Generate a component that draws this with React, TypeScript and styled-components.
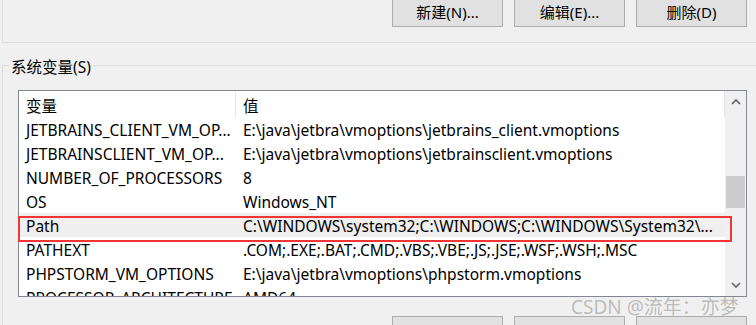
import React from 'react';
import styled, { createGlobalStyle } from 'styled-components';

const GlobalStyle = createGlobalStyle`
  html, body {
    margin: 0;
    padding: 0;
    background: #f0f0f0;
  }
  body {
    font-family: "Noto Sans", "Noto Sans CJK SC", sans-serif;
    font-size: 15px;
    color: #000000;
  }
`;

const rows = [
  { name: 'JETBRAINS_CLIENT_VM_OP...', value: 'E:\\java\\jetbra\\vmoptions\\jetbrains_client.vmoptions' },
  { name: 'JETBRAINSCLIENT_VM_OP...', value: 'E:\\java\\jetbra\\vmoptions\\jetbrainsclient.vmoptions' },
  { name: 'NUMBER_OF_PROCESSORS', value: '8' },
  { name: 'OS', value: 'Windows_NT' },
  { name: 'Path', value: 'C:\\WINDOWS\\system32;C:\\WINDOWS;C:\\WINDOWS\\System32\\...', selected: true },
  { name: 'PATHEXT', value: '.COM;.EXE;.BAT;.CMD;.VBS;.VBE;.JS;.JSE;.WSF;.WSH;.MSC' },
  { name: 'PHPSTORM_VM_OPTIONS', value: 'E:\\java\\jetbra\\vmoptions\\phpstorm.vmoptions' },
  { name: 'PROCESSOR_ARCHITECTURE', value: 'AMD64' },
];

const Page = styled.div`
  position: relative;
  width: 756px;
  height: 325px;
  overflow: hidden;
`;

const UserGroup = styled.div`
  width: 820px;
  height: 47px;
  margin-left: 2px;
  border-left: 1px solid #dcdcdc;
  border-bottom: 1px solid #dcdcdc;
  box-sizing: border-box;
`;

const ButtonRow = styled.div<{ $top: number; $left: number }>`
  display: flex;
  gap: 11px;
  padding-left: ${(p) => p.$left}px;
  margin-top: ${(p) => p.$top}px;
`;

const Button = styled.div`
  width: 111px;
  height: 31px;
  box-sizing: border-box;
  background: #e1e1e1;
  border: 1px solid #adadad;
  display: flex;
  align-items: center;
  justify-content: center;
  font-size: 15px;
  color: #000;
  white-space: nowrap;
`;

const SystemGroup = styled.fieldset`
  margin: 10px 0 0 2px;
  width: 820px;
  height: 320px;
  box-sizing: border-box;
  border: 1px solid #dcdcdc;
  padding: 13px 0 0 15px;
`;

const Legend = styled.legend`
  margin-left: -9px;
  padding: 4px 2px 0;
  font-size: 15.5px;
  color: #000;
  line-height: 20px;
`;

const ListBox = styled.div`
  width: 729px;
  height: 207px;
  box-sizing: border-box;
  border: 1px solid #828790;
  background: #ffffff;
  display: flex;
  overflow: hidden;
`;

const Columns = styled.div`
  flex: 1;
  display: flex;
  flex-direction: column;
  min-width: 0;
  font-size: 15.5px;
`;

const HeaderRow = styled.div`
  display: grid;
  grid-template-columns: 217px 1fr;
  height: 26px;
  flex-shrink: 0;
  border-right: 1px solid #e5e5e5;
`;

const HeaderCell = styled.div<{ $divider?: boolean }>`
  padding: 2px 0 0 7px;
  display: flex;
  align-items: center;
  border-right: ${(p) => (p.$divider ? '1px solid #e5e5e5' : 'none')};
  color: #000;
`;

const Row = styled.div<{ $selected?: boolean }>`
  display: grid;
  grid-template-columns: 217px 1fr;
  height: 24px;
  flex-shrink: 0;
  align-items: center;
  background: ${(p) => (p.$selected ? '#efefef' : 'transparent')};
`;

const Cell = styled.div`
  padding: 2px 0 0 7px;
  white-space: nowrap;
  overflow: hidden;
  color: #000;
`;

const Scrollbar = styled.div`
  width: 21px;
  flex-shrink: 0;
  background: #f0f0f0;
  display: flex;
  flex-direction: column;
  align-items: center;
`;

const Arrow = styled.div`
  height: 22px;
  width: 100%;
  display: flex;
  align-items: center;
  justify-content: center;
`;

const Track = styled.div`
  flex: 1;
  width: 100%;
  display: flex;
  flex-direction: column;
  align-items: center;
`;

const Thumb = styled.div`
  width: 19px;
  height: 32px;
  margin-top: 63px;
  background: #cdcdcd;
`;

const Highlight = styled.div`
  position: absolute;
  left: 18px;
  top: 216px;
  width: 714px;
  height: 26px;
  box-sizing: border-box;
  border: 2px solid #f23434;
  pointer-events: none;
`;

const Watermark = styled.div`
  position: absolute;
  left: 571px;
  top: 295px;
  font-family: "Noto Sans", "Noto Sans CJK SC", sans-serif;
  font-size: 19px;
  line-height: 24px;
  color: rgba(120, 120, 120, 0.45);
  white-space: nowrap;
`;

const Chevron: React.FC<{ down?: boolean }> = ({ down }) => (
  <svg width="10" height="6" viewBox="0 0 10 6">
    <polyline
      points={down ? '1,1 5,5 9,1' : '1,5 5,1 9,5'}
      fill="none"
      stroke="#606060"
      strokeWidth="1.6"
    />
  </svg>
);

export default function App() {
  return (
    <Page>
      <GlobalStyle />
      <UserGroup>
        <ButtonRow $top={-4} $left={389}>
          <Button>新建(N)...</Button>
          <Button>编辑(E)...</Button>
          <Button>删除(D)</Button>
        </ButtonRow>
      </UserGroup>
      <SystemGroup>
        <Legend>系统变量(S)</Legend>
        <ListBox>
          <Columns>
            <HeaderRow>
              <HeaderCell $divider>变量</HeaderCell>
              <HeaderCell>值</HeaderCell>
            </HeaderRow>
            {rows.map((r) => (
              <Row key={r.name} $selected={r.selected}>
                <Cell>{r.name}</Cell>
                <Cell>{r.value}</Cell>
              </Row>
            ))}
          </Columns>
          <Scrollbar>
            <Arrow>
              <Chevron />
            </Arrow>
            <Track>
              <Thumb />
            </Track>
            <Arrow>
              <Chevron down />
            </Arrow>
          </Scrollbar>
        </ListBox>
        <ButtonRow $top={19} $left={374}>
          <Button />
          <Button />
          <Button />
        </ButtonRow>
      </SystemGroup>
      <Highlight />
      <Watermark>CSDN @流年：亦梦</Watermark>
    </Page>
  );
}
